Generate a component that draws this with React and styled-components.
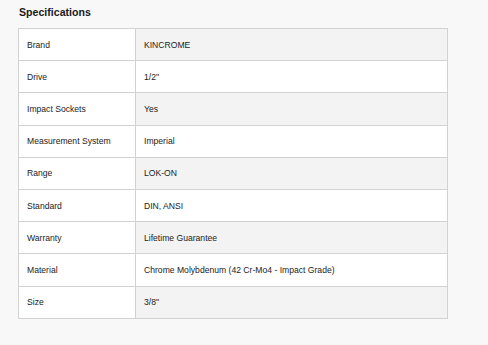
import React from "react";
import styled, { createGlobalStyle } from "styled-components";

const GlobalStyle = createGlobalStyle`
  html, body {
    margin: 0;
    padding: 0;
    background: #f8f8f8;
  }
`;

const Page = styled.div`
  width: 488px;
  height: 345px;
  padding: 4px 40px 0 18px;
  box-sizing: border-box;
  font-family: "Liberation Sans", Arial, sans-serif;
  color: #222;
`;

const Title = styled.h3`
  margin: 0 0 8px 1px;
  font-size: 10.6px;
  font-weight: bold;
  line-height: 16px;
  color: #1a1a1a;
`;

const Table = styled.table`
  width: 430px;
  border-collapse: collapse;
  border: 1px solid #d2d2d2;
  font-size: 8.6px;
`;

const Cell = styled.td`
  height: 31.2px;
  padding: 0 8px;
  border-bottom: 1px solid #d2d2d2;
  background: ${(p) => (p.$shaded ? "#f3f3f3" : "#ffffff")};
  ${(p) => p.$label && "width: 100px; border-right: 1px solid #d2d2d2;"}
`;

const specs = [
  ["Brand", "KINCROME"],
  ["Drive", "1/2\""],
  ["Impact Sockets", "Yes"],
  ["Measurement System", "Imperial"],
  ["Range", "LOK-ON"],
  ["Standard", "DIN, ANSI"],
  ["Warranty", "Lifetime Guarantee"],
  ["Material", "Chrome Molybdenum (42 Cr-Mo4 - Impact Grade)"],
  ["Size", "3/8\""],
];

export default function App() {
  return (
    <>
      <GlobalStyle />
      <Page>
        <Title>Specifications</Title>
        <Table>
          <tbody>
            {specs.map(([label, value], i) => (
              <tr key={label}>
                <Cell $label>{label}</Cell>
                <Cell $shaded={i % 2 === 0}>{value}</Cell>
              </tr>
            ))}
          </tbody>
        </Table>
      </Page>
    </>
  );
}
